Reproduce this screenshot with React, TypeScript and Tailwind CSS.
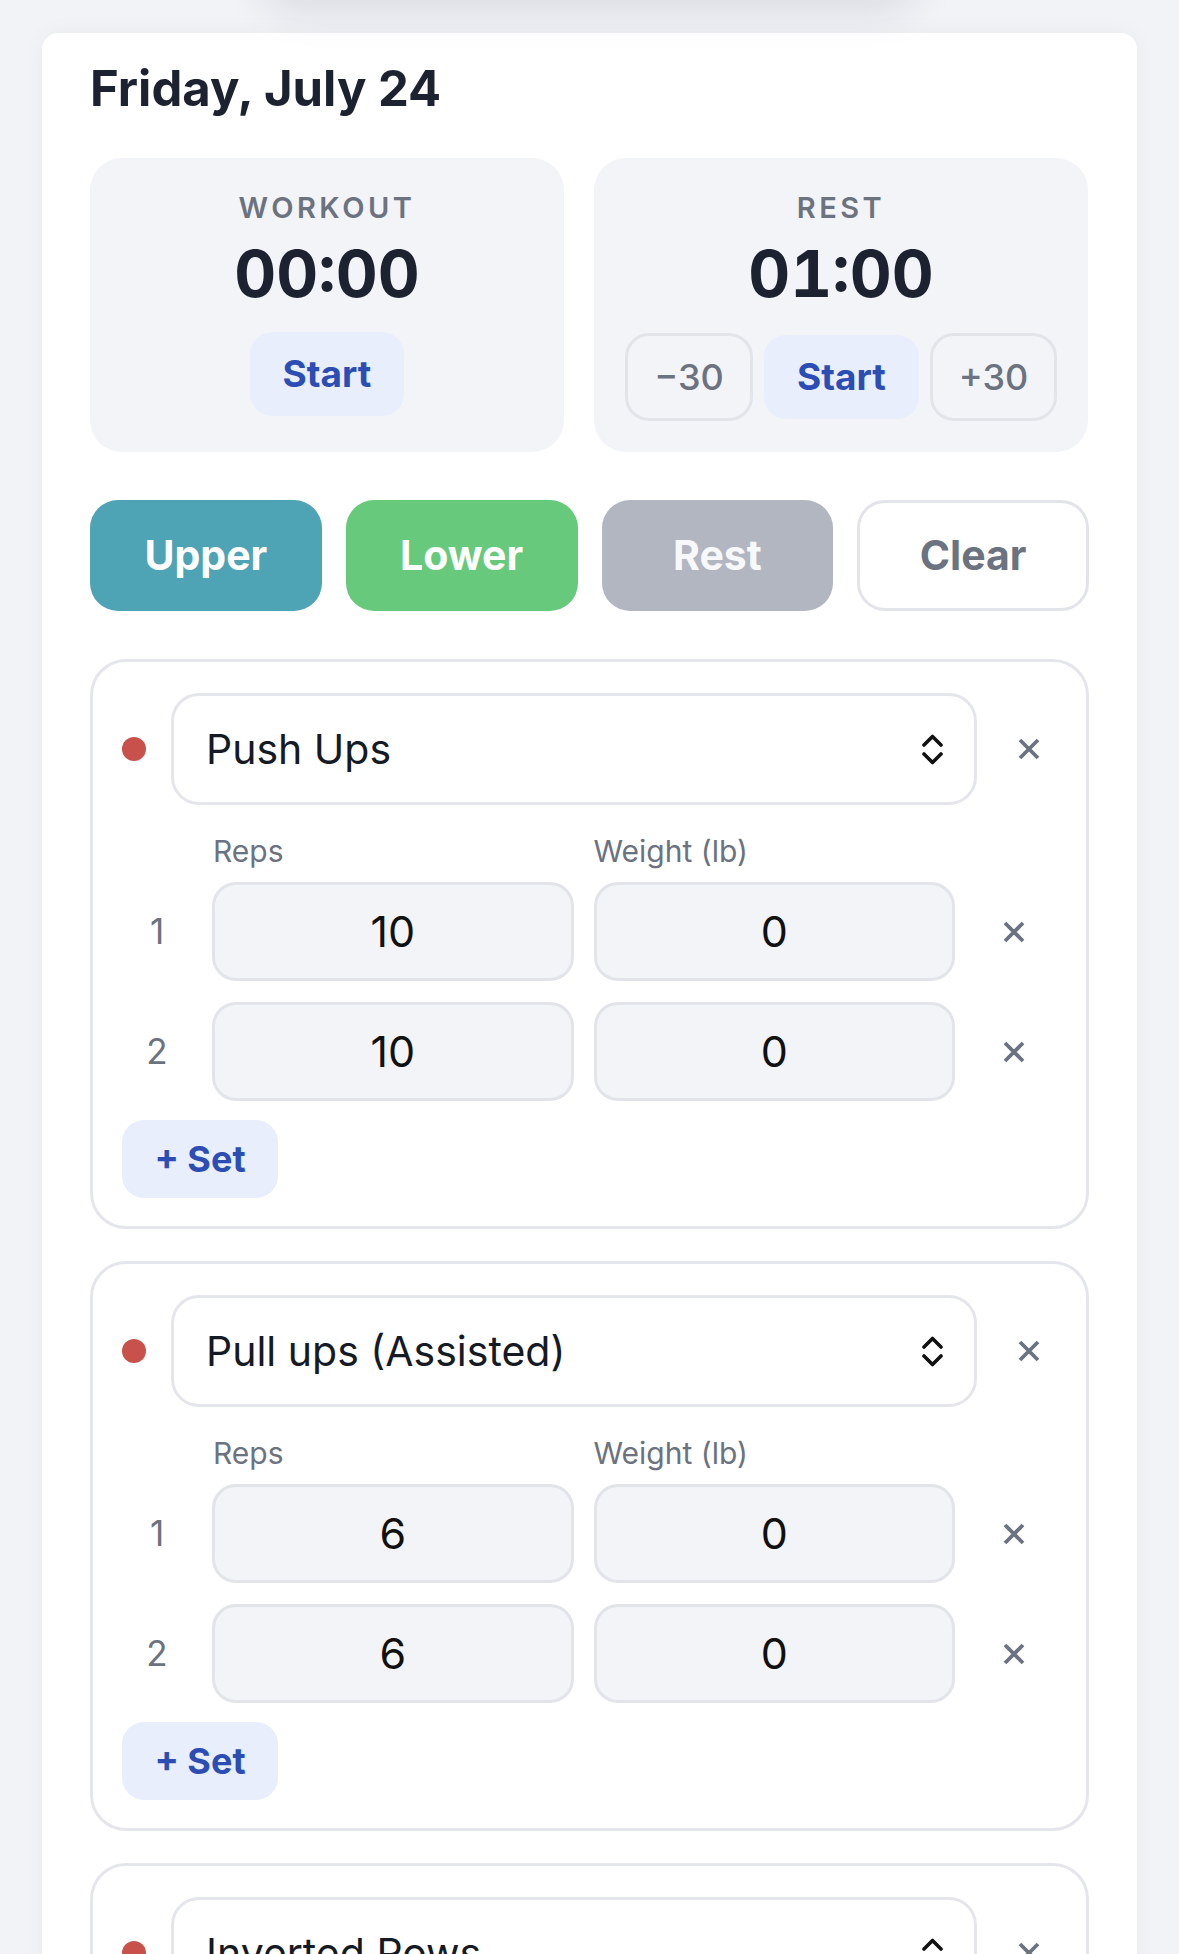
import React from "react";

function XIcon({ size = 23 }: { size?: number }) {
  return (
    <svg width={size} height={size} viewBox="0 0 24 24" fill="none" stroke="currentColor" strokeWidth={3.8}>
      <path d="M3 3 L21 21 M21 3 L3 21" />
    </svg>
  );
}

function Chevrons() {
  return (
    <svg width="23" height="31" viewBox="0 0 23 31" fill="none" stroke="#111111" strokeWidth={3.6} strokeLinecap="round" strokeLinejoin="round">
      <path d="M3 11 L11.5 2.5 L20 11" />
      <path d="M3 20 L11.5 28.5 L20 20" />
    </svg>
  );
}

type SetRow = { reps: string; weight: string };

function ExerciseCard({ name, sets }: { name: string; sets: SetRow[] }) {
  return (
    <div className="rounded-[36px] border-[3px] border-[#e4e6eb] bg-white px-[29px] pb-[28px] pt-[31px]">
      <div className="flex items-center">
        <div className="h-[24px] w-[24px] shrink-0 rounded-full bg-[#c8524b]" />
        <div className="ml-[25px] flex h-[112px] flex-1 items-center justify-between rounded-[28px] border-[3px] border-[#e4e6eb] bg-white pl-[32px] pr-[30px]">
          <span className="text-[41px] leading-[41px] text-[#151a24]">{name}</span>
          <Chevrons />
        </div>
        <div className="ml-[24px] flex w-[56px] shrink-0 justify-center text-[#6b7280]">
          <XIcon size={24} />
        </div>
      </div>
      <div className="mt-[31px] grid grid-cols-[70px_1fr_1fr_82px] gap-x-[20px] text-[30px] leading-[30px] text-[#6b7280]">
        <div />
        <div className="pl-[1px]">Reps</div>
        <div>Weight (lb)</div>
        <div />
      </div>
      <div className="mt-[16px] flex flex-col gap-[21px]">
        {sets.map((s, i) => (
          <div key={i} className="grid grid-cols-[70px_1fr_1fr_82px] items-center gap-x-[20px]">
            <div className="text-center text-[35px] text-[#6b7280]">{i + 1}</div>
            <div className="flex h-[99px] items-center justify-center rounded-[24px] border-[3px] border-[#e2e4e9] bg-[#f3f4f8] text-[43px] text-[#111111]">
              {s.reps}
            </div>
            <div className="flex h-[99px] items-center justify-center rounded-[24px] border-[3px] border-[#e2e4e9] bg-[#f3f4f8] text-[43px] text-[#111111]">
              {s.weight}
            </div>
            <div className="flex justify-center pr-[4px] text-[#6b7280]">
              <XIcon size={24} />
            </div>
          </div>
        ))}
      </div>
      <button className="mt-[19px] flex h-[78px] w-[156px] items-center justify-center rounded-[22px] bg-[#e8eefc] text-[36px] font-bold text-[#2c4db4]">
        + Set
      </button>
    </div>
  );
}

export default function App() {
  return (
    <div className="relative min-h-screen overflow-hidden bg-[#f2f3f7] font-[family-name:Inter,sans-serif]">
      <div className="absolute left-[260px] top-[-70px] z-10 h-[70px] w-[660px] rounded-full bg-[#f2f3f7] shadow-[0_12px_40px_rgba(20,30,60,0.10)]" />
      <div className="px-[42px] pt-[33px]">
        <div className="rounded-t-[16px] bg-white px-[48px] pb-[40px] pt-[31px] shadow-[0_0_24px_rgba(20,30,60,0.04)]">
          <h1 className="text-[49px] font-bold leading-[50px] text-[#1c2230]">Friday, July 24</h1>

          <div className="mt-[44px] grid grid-cols-[474px_494px] gap-x-[30px]">
            <div className="flex flex-col items-center rounded-[32px] bg-[#f3f4f8] pb-[31px] pt-[35px]">
              <div className="text-[29px] font-semibold leading-[29px] tracking-[3.5px] text-[#6b7280]">WORKOUT</div>
              <div className="mt-[19px] text-[65px] font-bold leading-[65px] tabular-nums text-[#1c2230]">00:00</div>
              <button className="mt-[26px] flex h-[84px] w-[154px] items-center justify-center rounded-[22px] bg-[#e8eefc] text-[37px] font-bold text-[#2c4db4]">
                Start
              </button>
            </div>
            <div className="flex flex-col items-center rounded-[32px] bg-[#f3f4f8] pb-[31px] pt-[35px]">
              <div className="text-[29px] font-semibold leading-[29px] tracking-[3.5px] text-[#6b7280]">REST</div>
              <div className="mt-[19px] text-[65px] font-bold leading-[65px] tabular-nums text-[#1c2230]">01:00</div>
              <div className="mt-[27px] flex h-[88px] items-center gap-[11px]">
                <button className="flex h-[88px] w-[128px] items-center justify-center rounded-[24px] border-[3px] border-[#e2e4e9] text-[36px] font-medium text-[#6b7280]">
                  −30
                </button>
                <button className="flex h-[84px] w-[155px] items-center justify-center rounded-[22px] bg-[#e8eefc] text-[37px] font-bold text-[#2c4db4]">
                  Start
                </button>
                <button className="flex h-[88px] w-[127px] items-center justify-center rounded-[24px] border-[3px] border-[#e2e4e9] text-[36px] font-medium text-[#6b7280]">
                  +30
                </button>
              </div>
            </div>
          </div>

          <div className="mt-[48px] grid grid-cols-4 gap-x-[24px]">
            <button className="flex h-[111px] items-center justify-center rounded-[28px] bg-[#4ea3b5] text-[41px] font-bold text-white">Upper</button>
            <button className="flex h-[111px] items-center justify-center rounded-[28px] bg-[#67c97b] text-[41px] font-bold text-white">Lower</button>
            <button className="flex h-[111px] items-center justify-center rounded-[28px] bg-[#b1b6c0] text-[41px] font-bold text-[#f7f8fa]">Rest</button>
            <button className="flex h-[111px] items-center justify-center rounded-[28px] border-[3px] border-[#e2e4e9] bg-white text-[41px] font-bold text-[#6b7280]">Clear</button>
          </div>

          <div className="mt-[48px] flex flex-col gap-[32px]">
            <ExerciseCard name="Push Ups" sets={[{ reps: "10", weight: "0" }, { reps: "10", weight: "0" }]} />
            <ExerciseCard name="Pull ups (Assisted)" sets={[{ reps: "6", weight: "0" }, { reps: "6", weight: "0" }]} />
            <ExerciseCard name="Inverted Rows" sets={[{ reps: "8", weight: "0" }, { reps: "8", weight: "0" }]} />
          </div>
        </div>
      </div>
    </div>
  );
}
